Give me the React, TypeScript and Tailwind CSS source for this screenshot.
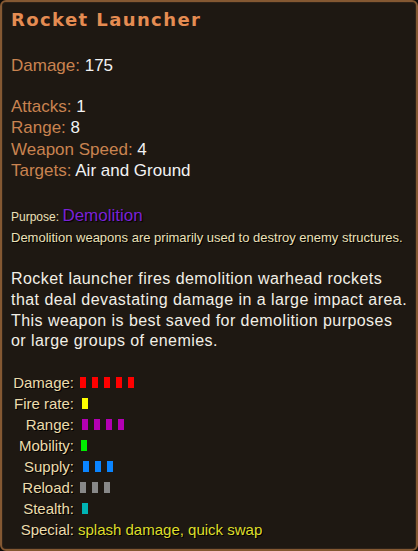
import React from "react";

const sans = { fontFamily: "'Liberation Sans', Arial, sans-serif" };

type Stat = { label: string; count: number; color: string; offset: string };

const stats: Stat[] = [
  { label: "Damage:", count: 5, color: "bg-[#ff0000]", offset: "ml-[6px]" },
  { label: "Fire rate:", count: 1, color: "bg-[#ffff00]", offset: "ml-[8px]" },
  { label: "Range:", count: 4, color: "bg-[#b400b4]", offset: "ml-[8px]" },
  { label: "Mobility:", count: 1, color: "bg-[#00ee00]", offset: "ml-[7px]" },
  { label: "Supply:", count: 3, color: "bg-[#0a84ff]", offset: "ml-[9px]" },
  { label: "Reload:", count: 3, color: "bg-[#888888]", offset: "ml-[6px]" },
  { label: "Stealth:", count: 1, color: "bg-[#00b4b4]", offset: "ml-[8px]" },
];

export default function App() {
  return (
    <div className="w-[418px] h-[551px] bg-[#0c0a08]">
      <div className="w-full h-full rounded-[6px] border-2 border-[#845832] bg-[#1e1812] shadow-[inset_0_0_0_1px_#2e2218] pl-[9px] pr-2 overflow-hidden">
        {/* Title */}
        <h1
          className="mt-[7px] text-[18px] leading-[22px] font-bold tracking-[1.4px] text-[#e58c52]"
          style={{ fontFamily: "'DejaVu Sans', Verdana, sans-serif" }}
        >
          Rocket Launcher
        </h1>

        {/* Main stats */}
        <div className="text-[17px] leading-[21px]" style={sans}>
          <p className="mt-[24px]">
            <span className="text-[#c98350]">Damage: </span>
            <span className="text-[#f2f2f2]">175</span>
          </p>
          <div className="mt-[20px] leading-[21.3px]">
            <p>
              <span className="text-[#c98350]">Attacks: </span>
              <span className="text-[#f2f2f2]">1</span>
            </p>
            <p>
              <span className="text-[#c98350]">Range: </span>
              <span className="text-[#f2f2f2]">8</span>
            </p>
            <p>
              <span className="text-[#c98350]">Weapon Speed: </span>
              <span className="text-[#f2f2f2]">4</span>
            </p>
            <p>
              <span className="text-[#c98350]">Targets: </span>
              <span className="text-[#f2f2f2]">Air and Ground</span>
            </p>
          </div>
        </div>

        {/* Purpose */}
        <div className="mt-[24px]" style={sans}>
          <p className="leading-[22px]">
            <span className="text-[12px] text-[#ece0b8]">Purpose: </span>
            <span className="text-[17px] text-[#7a22d6] [text-shadow:1px_1px_1px_#000]">Demolition</span>
          </p>
          <p className="text-[13px] leading-[20px] text-[#ece0b8] [text-shadow:1px_1px_0_#000] whitespace-nowrap">
            Demolition weapons are primarily used to destroy enemy structures.
          </p>
        </div>

        {/* Description */}
        <p
          className="mt-[21px] text-[16px] leading-[20.7px] tracking-[0.45px] text-[#f2efe6] w-[398px]"
          style={sans}
        >
          Rocket launcher fires demolition warhead rockets that deal devastating damage in a large impact area. This weapon is best saved for demolition purposes or large groups of enemies.
        </p>

        {/* Stat bars */}
        <div className="mt-[20px] text-[15px] leading-[21px] text-[#ecdcac] [text-shadow:1px_1px_0_#000]" style={sans}>
          {stats.map((s) => (
            <div key={s.label} className="flex items-center">
              <span className="w-[63px] text-right">{s.label}</span>
              <div className={`flex gap-[6px] ${s.offset}`}>
                {Array.from({ length: s.count }).map((_, i) => (
                  <span key={i} className={`block w-[6px] h-[11px] ${s.color}`} />
                ))}
              </div>
            </div>
          ))}
          <div className="flex">
            <span className="w-[63px] text-right">Special:</span>
            <span className="ml-[4px] text-[#dede2a]">splash damage, quick swap</span>
          </div>
        </div>
      </div>
    </div>
  );
}
